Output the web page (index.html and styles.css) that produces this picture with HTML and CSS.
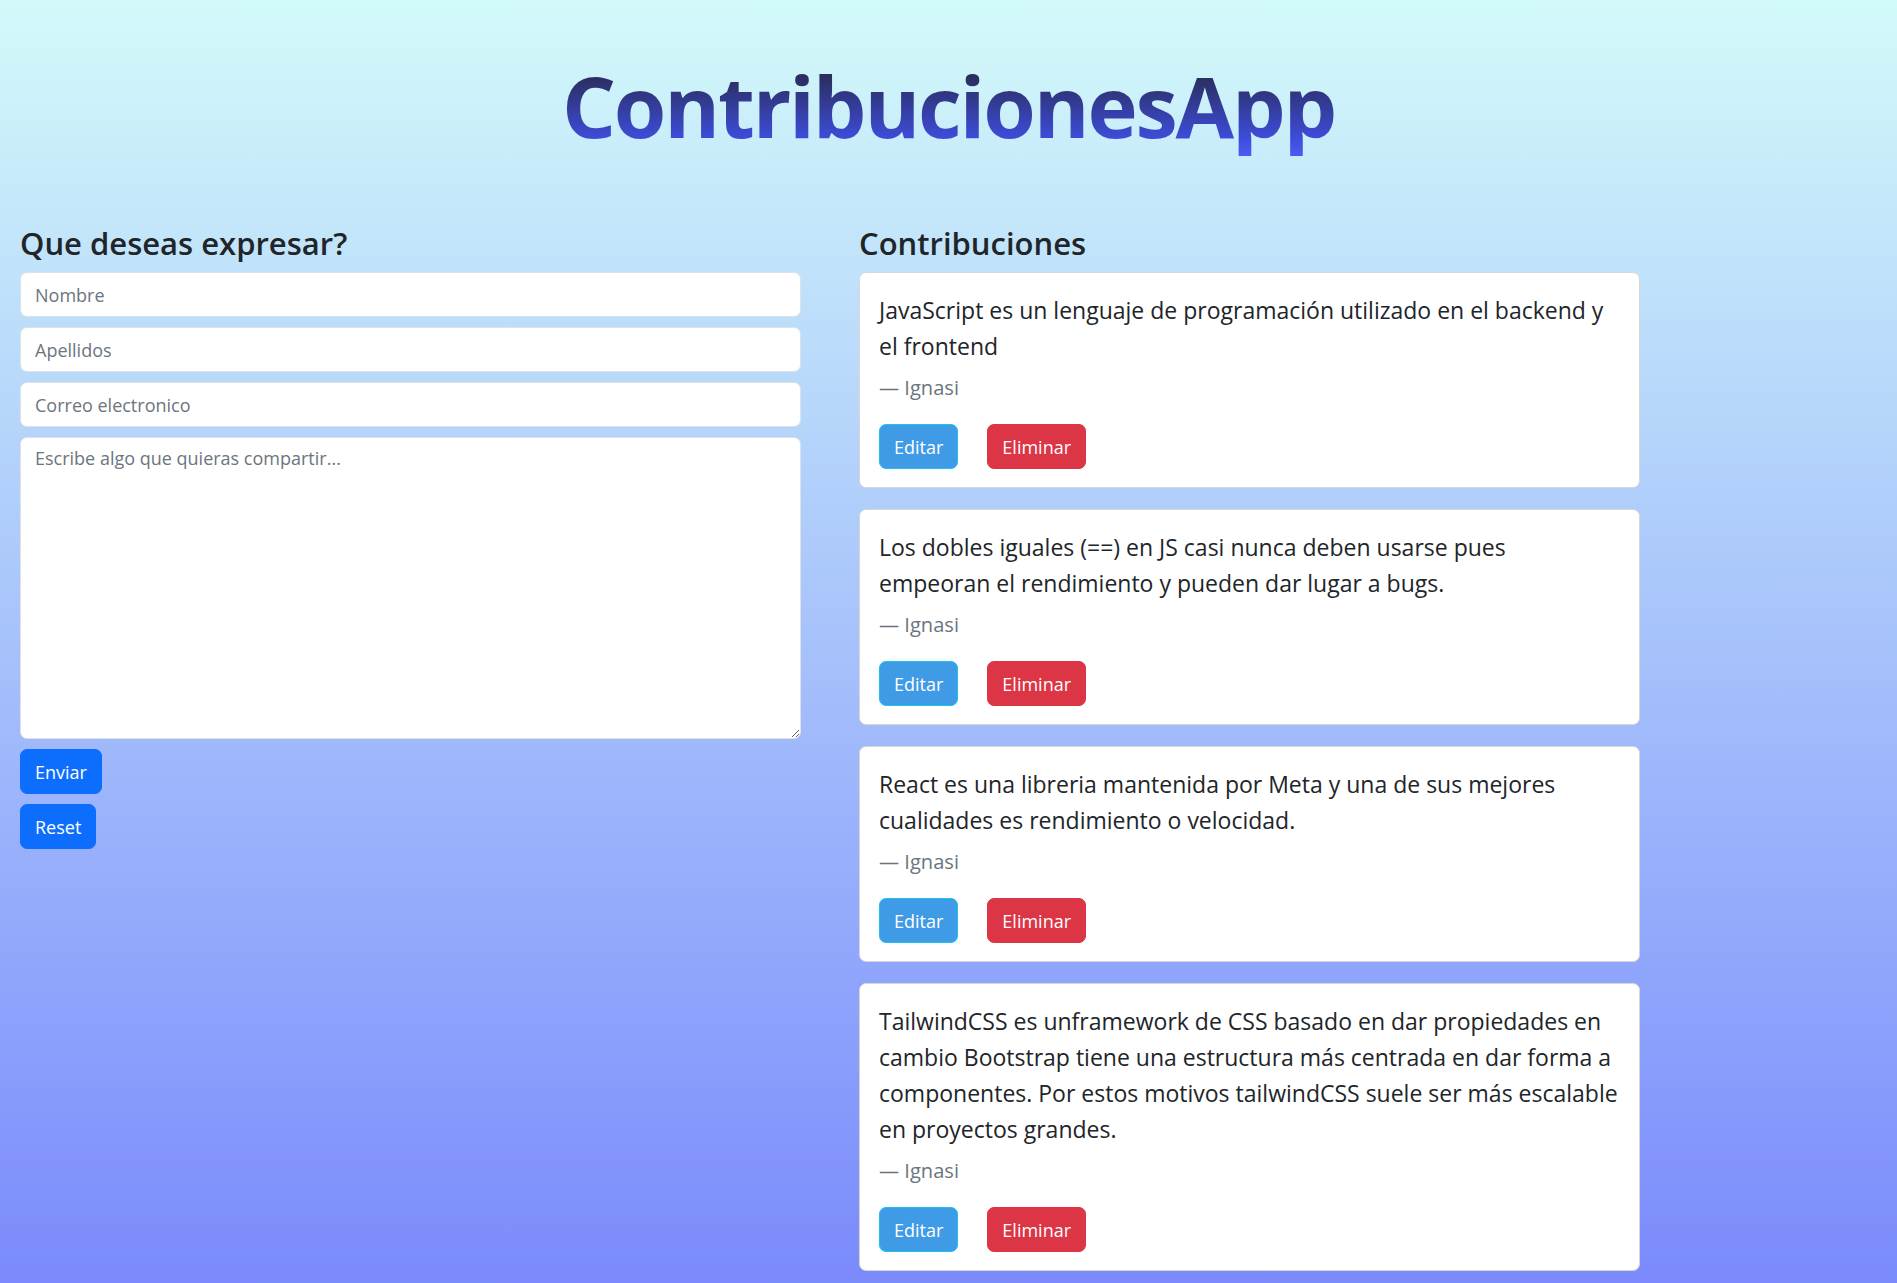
FILE: index.html
```html
<!DOCTYPE html>
<html lang="es">
<head>
<meta charset="utf-8">
<title>ContribucionesApp</title>
<link rel="stylesheet" href="styles.css">
</head>
<body>
<header class="page-header">
  <h1 class="app-title"><span class="title-text">ContribucionesApp</span></h1>
</header>
<main class="layout">
  <section class="form-col">
    <h2 class="section-title">Que deseas expresar?</h2>
    <form class="contrib-form">
      <input class="field" type="text" placeholder="Nombre">
      <input class="field" type="text" placeholder="Apellidos">
      <input class="field" type="email" placeholder="Correo electronico">
      <textarea class="field field-area" placeholder="Escribe algo que quieras compartir..."></textarea>
      <button type="button" class="btn btn-primary">Enviar</button>
      <button type="reset" class="btn btn-primary">Reset</button>
    </form>
  </section>
  <section class="list-col">
    <h2 class="section-title">Contribuciones</h2>
    <div class="cards">
      <article class="card">
        <p class="quote-text">JavaScript es un lenguaje de programación utilizado en el backend y el frontend</p>
        <p class="quote-author">— Ignasi</p>
        <div class="card-actions">
          <button type="button" class="btn btn-edit">Editar</button>
          <button type="button" class="btn btn-delete">Eliminar</button>
        </div>
      </article>
      <article class="card">
        <p class="quote-text">Los dobles iguales (==) en JS casi nunca deben usarse pues empeoran el rendimiento y pueden dar lugar a bugs.</p>
        <p class="quote-author">— Ignasi</p>
        <div class="card-actions">
          <button type="button" class="btn btn-edit">Editar</button>
          <button type="button" class="btn btn-delete">Eliminar</button>
        </div>
      </article>
      <article class="card">
        <p class="quote-text">React es una libreria mantenida por Meta y una de sus mejores cualidades es rendimiento o velocidad.</p>
        <p class="quote-author">— Ignasi</p>
        <div class="card-actions">
          <button type="button" class="btn btn-edit">Editar</button>
          <button type="button" class="btn btn-delete">Eliminar</button>
        </div>
      </article>
      <article class="card">
        <p class="quote-text">TailwindCSS es unframework de CSS basado en dar propiedades en cambio Bootstrap tiene una estructura más centrada en dar forma a componentes. Por estos motivos tailwindCSS suele ser más escalable en proyectos grandes.</p>
        <p class="quote-author">— Ignasi</p>
        <div class="card-actions">
          <button type="button" class="btn btn-edit">Editar</button>
          <button type="button" class="btn btn-delete">Eliminar</button>
        </div>
      </article>
    </div>
  </section>
</main>
</body>
</html>
```

FILE: styles.css
```css
* { box-sizing: border-box; }

html { background: #7b8bfc; }

body {
  margin: 0;
  min-height: 100vh;
  font-family: "Open Sans", "Noto Sans", sans-serif;
  color: #212529;
  background: linear-gradient(180deg, #d3fafa 0%, #7a8afc 100%);
}

.page-header {
  padding-top: 54px;
  text-align: center;
}

.app-title {
  margin: 0;
  font-size: 85px;
  line-height: 102px;
  font-weight: 700;
  letter-spacing: -2.2px;
}

.title-text {
  display: inline-block;
  background: linear-gradient(180deg, #24244a 0%, #2b2e5e 22%, #3d4cd8 82%, #4a5cf6 100%);
  -webkit-background-clip: text;
  background-clip: text;
  color: transparent;
}

.layout {
  margin-top: 67px;
  padding-left: 20px;
  display: grid;
  grid-template-columns: 781px 781px;
  column-gap: 58px;
  align-items: start;
}

.section-title {
  margin: 0 0 9px;
  font-size: 31px;
  line-height: 40px;
  font-weight: 600;
  color: #212529;
}

.contrib-form {
  display: flex;
  flex-direction: column;
  align-items: flex-start;
  gap: 10px;
}

.field {
  width: 100%;
  height: 45px;
  padding: 0 14px;
  font-family: inherit;
  font-size: 18px;
  color: #212529;
  background: #fff;
  border: 1px solid #dee2e6;
  border-radius: 7px;
  outline: none;
}

.field::placeholder { color: #6c757d; opacity: 1; }

.field-area {
  height: 302px;
  padding: 6px 14px;
  line-height: 29px;
  resize: vertical;
}

.btn {
  height: 45px;
  padding: 0 14px;
  font-family: inherit;
  font-size: 18px;
  color: #fff;
  border: 1px solid transparent;
  border-radius: 7px;
  cursor: pointer;
}

.btn-primary { background: #0d6efd; border-color: #0d6efd; }
.btn-edit { background: #3f9be6; border-color: #1cc3ef; }
.btn-delete { background: #dc3545; border-color: #dc3545; }

.cards {
  display: flex;
  flex-direction: column;
  gap: 21px;
}

.card {
  background: #fff;
  border: 1px solid #d6d6d6;
  border-radius: 7px;
  padding: 19px 19px 18px;
}

.quote-text {
  margin: 0;
  font-size: 23px;
  line-height: 36px;
  color: #212529;
}

.quote-author {
  margin: 8px 0 0;
  font-size: 20.1px;
  line-height: 31px;
  color: #6c757d;
}

.card-actions {
  margin-top: 21px;
  display: flex;
  gap: 29px;
}
```
